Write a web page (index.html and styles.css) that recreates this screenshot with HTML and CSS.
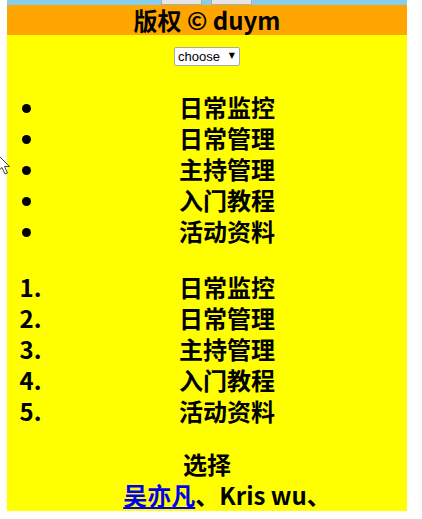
FILE: index.html
```html
<!DOCTYPE html>
<html lang="zh-CN">
<head>
<meta charset="utf-8">
<title>duym</title>
<link rel="stylesheet" href="styles.css">
</head>
<body>
<div class="page">
  <nav class="topbar">
    <span class="tbtn"></span>
    <span class="tbtn"></span>
  </nav>
  <footer class="copy">
    <h2 class="copy-title">版权 © duym</h2>
  </footer>
  <main class="content">
    <div class="picker">
      <span class="select-wrap">
        <select class="select">
          <option>choose</option>
        </select>
      </span>
    </div>
    <ul class="list">
      <li>日常监控</li>
      <li>日常管理</li>
      <li>主持管理</li>
      <li>入门教程</li>
      <li>活动资料</li>
    </ul>
    <ol class="list">
      <li>日常监控</li>
      <li>日常管理</li>
      <li>主持管理</li>
      <li>入门教程</li>
      <li>活动资料</li>
    </ol>
    <dl class="deflist">
      <dt>选择</dt>
      <dd><a href="#" class="link">吴亦凡</a>、Kris wu、</dd>
    </dl>
  </main>
</div>
<svg class="cursor" width="14" height="22" viewBox="0 0 14 22">
  <path d="M1 1 L1 17 L5 13.5 L8 20 L10.5 19 L7.5 12.5 L12.5 12.5 Z" fill="#fff" stroke="#444" stroke-width="1"/>
</svg>
</body>
</html>
```
FILE: styles.css
```css
html, body {
  margin: 0;
  padding: 0;
  background: #fff;
}
body {
  font-family: "Noto Sans CJK SC", sans-serif;
  overflow: hidden;
}
.page {
  width: 400px;
  margin-left: 7px;
}
.topbar {
  height: 5px;
  background: #87ceeb;
  display: flex;
  align-items: flex-end;
  overflow: hidden;
  padding-left: 154px;
  gap: 9px;
}
.tbtn {
  flex: none;
  width: 39px;
  height: 20px;
  background: #e6e6e6;
  border: 1px solid #adadad;
}
.copy {
  background: #ffa500;
}
.copy-title {
  margin: 0;
  font-size: 24px;
  line-height: 30px;
  font-weight: bold;
  text-align: center;
  color: #000;
}
.content {
  background: #ffff00;
  padding: 12px 0 1px;
}
.picker {
  display: flex;
  justify-content: center;
  height: 19px;
}
.select-wrap {
  position: relative;
  display: block;
}
.select {
  appearance: none;
  -webkit-appearance: none;
  display: block;
  width: 66px;
  height: 19px;
  margin: 0;
  padding: 0 0 0 3px;
  border: 1px solid #a9a9a9;
  border-radius: 2px;
  background: #fff;
  font-family: "Liberation Sans", Arial, sans-serif;
  font-size: 13px;
  color: #000;
}
.select-wrap::after {
  content: "▼";
  position: absolute;
  right: 5px;
  top: 4px;
  font-family: "DejaVu Sans", sans-serif;
  font-size: 8px;
  line-height: 10px;
  color: #000;
  pointer-events: none;
}
.list {
  margin: 25px 0 0;
  padding-left: 40px;
  font-size: 24px;
  line-height: 31px;
  font-weight: bold;
}
.list li {
  text-align: center;
}
.deflist {
  margin: 22px 0 0;
  font-size: 24px;
  line-height: 31px;
  font-weight: bold;
}
.deflist dt {
  text-align: center;
}
.deflist dd {
  margin-left: 40px;
  text-align: center;
}
.link {
  color: #0000ee;
  text-decoration: underline;
}
.cursor {
  position: absolute;
  left: -3px;
  top: 154px;
}
```
